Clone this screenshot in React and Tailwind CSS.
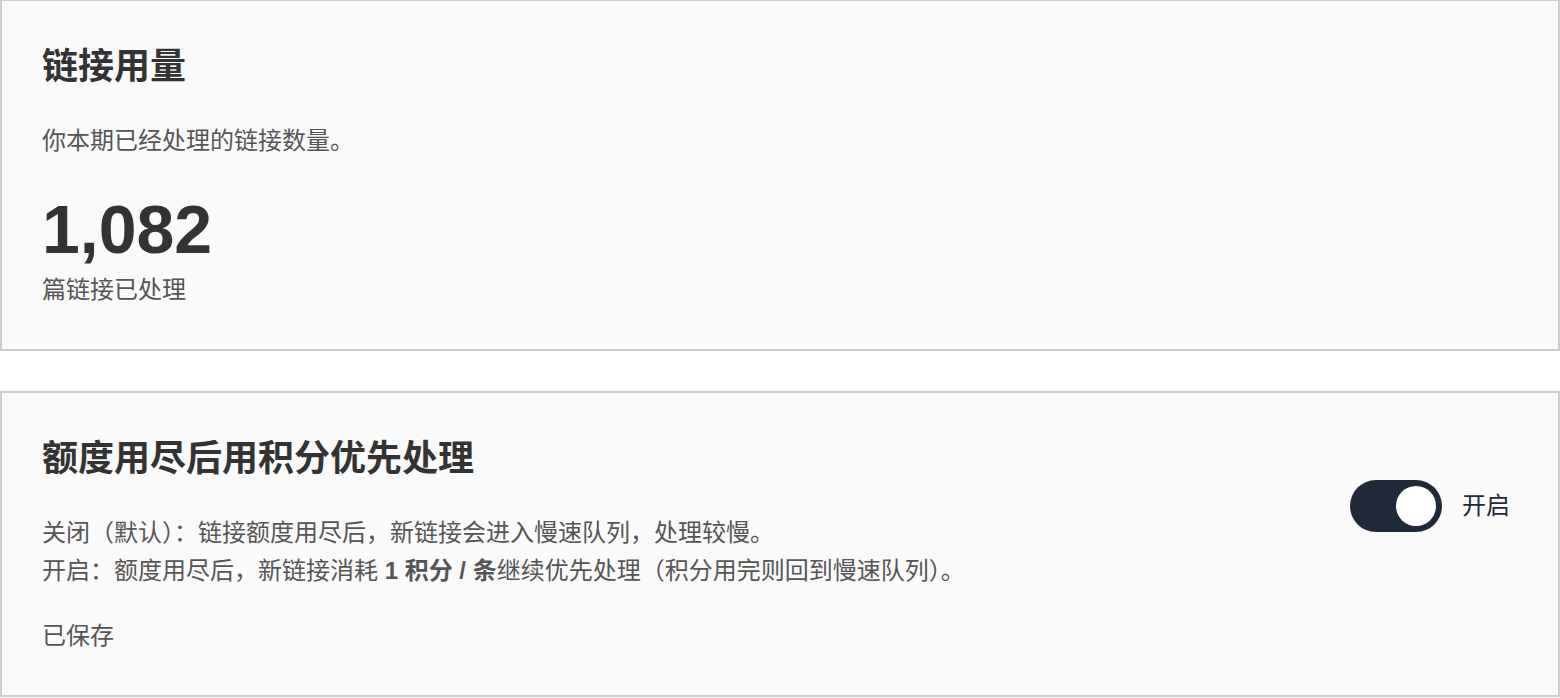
export default function App() {
  const font = { fontFamily: '"Liberation Sans", "Noto Sans CJK SC", sans-serif' };
  return (
    <div className="min-h-[698px] bg-white -mt-px" style={font}>
      <div className="border-2 border-[#cccccc] bg-[#fafafa] px-[40px] pt-[44px] pb-[40px]">
        <h2 className="text-[36px] leading-[44px] font-bold text-[#333333]">链接用量</h2>
        <p className="mt-[33px] text-[24px] leading-[38px] text-[#555555]">你本期已经处理的链接数量。</p>
        <div className="mt-[35px] text-[68px] leading-none font-bold text-[#333333]">1,082</div>
        <div className="mt-[8px] text-[24px] leading-[38px] text-[#555555]">篇链接已处理</div>
      </div>
      <div className="mt-[40px] border-2 border-[#cccccc] bg-[#fafafa] px-[40px] pt-[44px] pb-[40px] flex justify-between items-start">
        <div>
          <h2 className="text-[36px] leading-[44px] font-bold text-[#333333]">额度用尽后用积分优先处理</h2>
          <p className="mt-[33px] text-[24px] leading-[38px] text-[#555555]">
            关闭（默认）：链接额度用尽后，新链接会进入慢速队列，处理较慢。
            <br />
            开启：额度用尽后，新链接消耗 <strong className="font-bold">1 积分 / 条</strong>继续优先处理（积分用完则回到慢速队列）。
          </p>
          <p className="mt-[27px] text-[24px] leading-[38px] text-[#555555]">已保存</p>
        </div>
        <div className="mt-[43px] mr-[8px] flex items-center gap-[20px]">
          <button className="w-[92px] h-[52px] rounded-full bg-[#1f2937] flex items-center justify-end pr-[6px]">
            <span className="block w-[40px] h-[40px] rounded-full bg-white" />
          </button>
          <span className="text-[24px] leading-[38px] text-[#1f2937]">开启</span>
        </div>
      </div>
    </div>
  );
}
